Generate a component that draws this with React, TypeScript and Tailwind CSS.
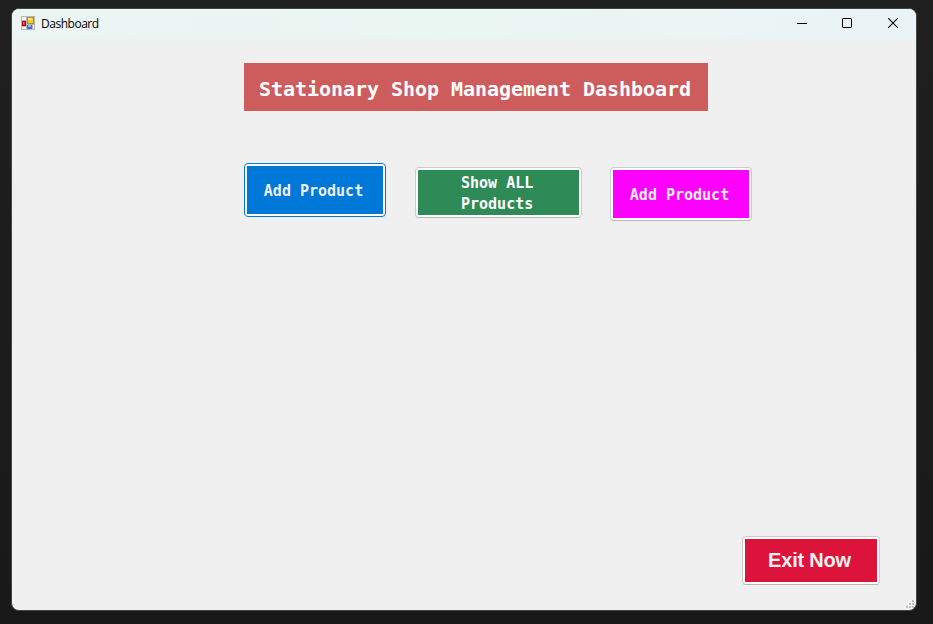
import React from "react";

const mono = "font-['DejaVu_Sans_Mono',monospace] font-bold";

function FormIcon() {
  return (
    <svg width="14" height="14" viewBox="0 0 14 14" shapeRendering="crispEdges">
      <rect width="14" height="14" fill="#b4b8b8" />
      <rect x="1" y="1" width="4" height="3" fill="#f4f6f6" />
      <rect x="1" y="11" width="4" height="2" fill="#f4f6f6" />
      <rect x="12" y="9" width="1" height="4" fill="#f4f6f6" />
      <rect x="1" y="5" width="4" height="5" fill="#a51010" />
      <rect x="2" y="6" width="2" height="3" fill="#d8331f" />
      <rect x="2" y="6" width="1" height="2" fill="#f08a70" />
      <rect x="6" y="1" width="7" height="7" fill="#c28c08" />
      <rect x="7" y="2" width="5" height="5" fill="#f8c838" />
      <rect x="7" y="2" width="4" height="2" fill="#ffe78a" />
      <rect x="6" y="9" width="5" height="4" fill="#3f70d8" />
      <rect x="7" y="9" width="3" height="2" fill="#86b0fb" />
    </svg>
  );
}

function TitleBar() {
  return (
    <header className="flex h-[30px] items-center justify-between bg-linear-to-r from-[#ebf5f4] via-[#eaf6f2] to-[#eaf4f6] pl-[9px] text-black">
      <div className="flex items-center gap-[6px] pb-[2px]">
        <FormIcon />
        <span className="pt-[2px] font-['Open_Sans','Noto_Sans',sans-serif] text-[12px] leading-[16px] tracking-[-0.48px]">
          Dashboard
        </span>
      </div>
      <div className="flex h-full">
        <button className="flex h-full w-[45px] items-center justify-center pb-[2px]">
          <svg width="10" height="10" shapeRendering="crispEdges">
            <path d="M0 5.5H10" stroke="#000" />
          </svg>
        </button>
        <button className="flex h-full w-[46px] items-center justify-center pb-[2px]">
          <svg width="10" height="10" fill="none">
            <rect x=".5" y=".5" width="9" height="9" rx=".5" stroke="#000" />
          </svg>
        </button>
        <button className="flex h-full w-[46px] items-center justify-center pb-[2px]">
          <svg width="10" height="10" fill="none">
            <path d="M.3.3L9.7 9.7M9.7.3L.3 9.7" stroke="#000" strokeWidth="1.1" />
          </svg>
        </button>
      </div>
    </header>
  );
}

function FormButton({ className, face, children }: { className: string; face: string; children: React.ReactNode }) {
  return (
    <button className={`shrink-0 rounded-[4px] border bg-white p-[2px] ${className}`}>
      <span className={`flex h-full w-full items-center justify-center ${face}`}>{children}</span>
    </button>
  );
}

export default function App() {
  return (
    <div className="h-[624px] w-[933px] overflow-hidden bg-[#1e1e1e] bg-linear-to-b from-[#1f1f1f] to-[#191919] pt-[8px] pl-[11px]">
      <div className="relative flex h-[603px] w-[906px] flex-col overflow-hidden rounded-[8px] border border-[#444646] bg-[#f0f0f0]">
        <TitleBar />
        <main className="flex flex-1 flex-col pt-[24px] pr-[36px] pb-[25px] pl-[232px]">
          <h1 className={`flex h-[48px] w-[464px] items-center bg-[#cd5c5c] pt-[3px] pl-[15px] text-[20px] leading-[24px] tracking-[-0.04px] whitespace-nowrap text-white ${mono}`}>
            Stationary Shop Management Dashboard
          </h1>
          <div className="mt-[52px] flex items-start">
            <FormButton className="h-[54px] w-[142px] border-[#0078d7]" face={`bg-[#0078d7] pt-[3px] pr-[3px] text-[15px] text-[#f0f0f0] ${mono}`}>
              Add Product
            </FormButton>
            <FormButton className="mt-[4px] ml-[29px] h-[51px] w-[167px] border-[#cccccc] border-b-[#b8b8b8]" face={`bg-[#2e8b57] pt-[2px] pr-[3px] text-[15px] leading-[21px] text-white ${mono}`}>
              <span className="w-[72px] text-left whitespace-nowrap">
                Show ALL
                <br />
                Products
              </span>
            </FormButton>
            <FormButton className="mt-[4px] ml-[28px] h-[54px] w-[142px] border-[#cccccc] border-b-[#b8b8b8]" face={`bg-[#ff00ff] pt-[3px] pr-[3px] text-[15px] text-[#f0f0f0] ${mono}`}>
              Add Product
            </FormButton>
          </div>
          <FormButton
            className="mt-auto h-[49px] w-[138px] self-end border-[#cccccc] border-b-[#b8b8b8]"
            face="bg-[#dc143c] pr-[3px] pb-[2px] font-['Liberation_Sans',Arial,sans-serif] text-[20px] font-bold tracking-[-0.2px] text-[#f0f0f0]"
          >
            Exit Now
          </FormButton>
        </main>
        <svg className="absolute right-[2px] bottom-[2px]" width="8" height="8" fill="#bfbfbf" shapeRendering="crispEdges">
          <path d="M6 0h2v2h-2zM3 3h2v2h-2zM6 3h2v2h-2zM0 6h2v2h-2zM3 6h2v2h-2zM6 6h2v2h-2z" />
        </svg>
      </div>
    </div>
  );
}
